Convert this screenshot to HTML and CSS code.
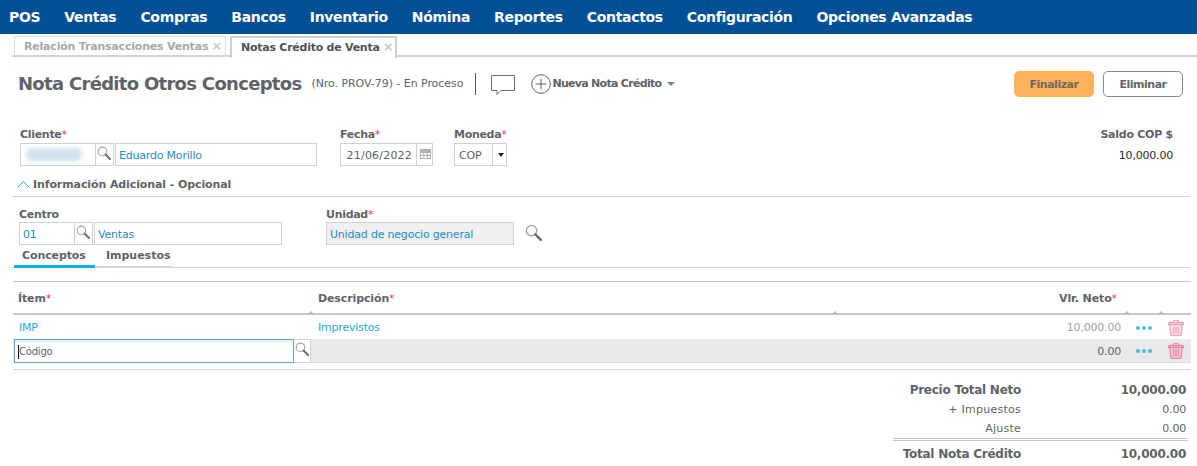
FILE: index.html
```html
<!DOCTYPE html>
<html lang="es">
<head>
<meta charset="utf-8">
<title>Nota Crédito</title>
<link rel="stylesheet" href="styles.css">
</head>
<body>
<svg class="defs" width="0" height="0">
  <symbol id="i-search" viewBox="0 0 16 16"><circle cx="6.200" cy="6.200" r="4.900" fill="none" stroke="#a0a4a7" stroke-width="1.300"/><path d="M9.800 9.800l5 5" stroke="#6d7275" stroke-width="2.400" stroke-linecap="round"/></symbol>
  <symbol id="i-trash" viewBox="0 0 16 16"><path d="M5.500 2.500V1.500a1 1 0 0 1 1-1h3a1 1 0 0 1 1 1v1" fill="none" stroke="currentColor" stroke-width="1.200"/><path d="M1.500 2.500h13a1 1 0 0 1 1 1v1h-15v-1a1 1 0 0 1 1-1zM2 4.500l.6 9.500a1.500 1.500 0 0 0 1.500 1.500h7.800a1.500 1.500 0 0 0 1.500-1.500l.6-9.500z" fill="currentColor" fill-opacity=".25" stroke="currentColor" stroke-width="1.400"/><path d="M5.500 6.500v7M8 6.500v7M10.500 6.500v7" fill="none" stroke="currentColor" stroke-width="1.500"/></symbol>
  <symbol id="i-dots" viewBox="0 0 16 4"><circle cx="2" cy="2" r="2"/><circle cx="8" cy="2" r="2"/><circle cx="14" cy="2" r="2"/></symbol>
</svg>
<nav class="topnav">
  <a>POS</a><a>Ventas</a><a>Compras</a><a>Bancos</a><a>Inventario</a><a>Nómina</a><a>Reportes</a><a>Contactos</a><a>Configuración</a><a>Opciones Avanzadas</a>
</nav>
<div class="doctabs">
  <div class="doctab">Relación Transacciones Ventas<span class="x">×</span></div>
  <div class="doctab active">Notas Crédito de Venta<span class="x">×</span></div>
</div>
<header class="titlebar">
  <h1>Nota Crédito Otros Conceptos</h1>
  <span class="docno">(Nro. PROV-79) - En Proceso</span>
  <span class="vsep"></span>
  <svg class="chat" width="24" height="21" viewBox="0 0 24 21"><path d="M.5.5h23v15H10l-4 4v-4H.5z" fill="none" stroke="#6b6f73"/></svg>
  <svg class="plus" width="20" height="20" viewBox="0 0 20 20"><circle cx="10" cy="10" r="9.300" fill="none" stroke="#5f6368"/><path d="M10 4.500v11M4.500 10h11" stroke="#5f6368"/></svg>
  <span class="newnote">Nueva Nota Crédito</span><span class="caret"></span>
  <div class="actions">
    <button class="btn primary">Finalizar</button>
    <button class="btn">Eliminar</button>
  </div>
</header>
<section class="formrow">
  <div class="field f-client">
    <label>Cliente<i>*</i></label>
    <div class="inputs">
      <div class="box code"><span class="blur"></span><span class="sbtn"><svg width="14" height="14"><use href="#i-search"/></svg></span></div>
      <div class="box name link">Eduardo Morillo</div>
    </div>
  </div>
  <div class="field f-date">
    <label>Fecha<i>*</i></label>
    <div class="box date"><span class="val">21/06/2022</span><span class="cal"><svg width="11" height="10" viewBox="0 0 11 10"><path d="M.5.5h10v9H.5zM.5 3.500h10M.5 6.500h10M3.800 3.500v6M7.200 3.500v6" fill="none" stroke="#b0b3b5"/><path d="M.5 1h10v2H.5z" fill="#b0b3b5"/></svg></span></div>
  </div>
  <div class="field f-cur">
    <label>Moneda<i>*</i></label>
    <div class="box cur"><span class="val">COP</span><span class="drop"></span></div>
  </div>
  <div class="saldo">
    <strong>Saldo COP $</strong>
    <span>10,000.00</span>
  </div>
</section>
<div class="collapse">
  <svg width="13" height="7" viewBox="0 0 13 7"><path d="M.5 6.500l6-6 6 6" fill="none" stroke="#1ba6d3"/></svg>
  <span>Información Adicional - Opcional</span>
</div>
<section class="formrow second">
  <div class="field f-centro">
    <label>Centro</label>
    <div class="inputs">
      <div class="box code2 link"><span class="val">01</span><span class="sbtn"><svg width="14" height="14"><use href="#i-search"/></svg></span></div>
      <div class="box name2 link">Ventas</div>
    </div>
  </div>
  <div class="field f-unidad">
    <label>Unidad<i>*</i></label>
    <div class="inputs">
      <div class="box unit link">Unidad de negocio general</div>
      <svg class="bigsearch" width="17" height="17"><use href="#i-search"/></svg>
    </div>
  </div>
</section>
<div class="subtabs">
  <div class="subtab on">Conceptos</div>
  <div class="subtab">Impuestos</div>
</div>
<section class="grid">
  <div class="row head">
    <div class="c-item">Ítem<i>*</i><b class="rz"></b></div>
    <div class="c-desc">Descripción<i>*</i><b class="rz"></b></div>
    <div class="c-val">Vlr. Neto<i>*</i><b class="rz"></b></div>
    <div class="c-more"><b class="rz"></b></div>
    <div class="c-del"></div>
  </div>
  <div class="row data">
    <div class="c-item link">IMP</div>
    <div class="c-desc link">Imprevistos</div>
    <div class="c-val muted">10,000.00</div>
    <div class="c-more"><svg class="dots" width="16" height="4"><use href="#i-dots"/></svg></div>
    <div class="c-del"><svg width="16" height="16"><use href="#i-trash"/></svg></div>
  </div>
  <div class="row edit">
    <div class="c-item"><div class="codeinput"><span class="cursor"></span>Código</div><span class="sbtn2"><svg width="14" height="14"><use href="#i-search"/></svg></span></div>
    <div class="c-desc"></div>
    <div class="c-val">0.00</div>
    <div class="c-more"><svg class="dots" width="16" height="4"><use href="#i-dots"/></svg></div>
    <div class="c-del"><svg width="16" height="16"><use href="#i-trash"/></svg></div>
  </div>
</section>
<section class="totals">
  <div class="tot strong"><span>Precio Total Neto</span><span>10,000.00</span></div>
  <div class="tot"><span class="lbl">+ Impuestos</span><span>0.00</span></div>
  <div class="tot"><span class="lbl">Ajuste</span><span>0.00</span></div>
  <div class="tot strong final"><span>Total Nota Crédito</span><span>10,000.00</span></div>
</section>
</body>
</html>
```
FILE: styles.css
```css
* { box-sizing: border-box; }
html, body { margin: 0; padding: 0; }
body { width: 1197px; height: 466px; overflow: hidden; background: #fff; font: 11px/14px "DejaVu Sans", Verdana, sans-serif; color: #5f6368; letter-spacing: -.2px; }
.defs { position: absolute; }
i { font-style: normal; color: #e0357a; font-weight: 400; }
.link { color: #1c8fbf; }

.topnav { height: 34px; background: #015096; display: flex; align-items: center; gap: 24px; padding-left: 9px; color: #fff; font-weight: 700; font-size: 14px; letter-spacing: -.32px; }

.doctabs { height: 23px; margin: 0 0 0 12px; padding: 2px 0 0 2px; display: flex; gap: 4px; border-bottom: 2px solid #d4d4d4; }
.doctab { height: 21px; padding: 0 4px 0 9px; border: 1px solid #dcdcdc; border-width: 1px 1px 0 1px; font-weight: 700; line-height: 17px; color: #a8a8a8; width: 212px; white-space: nowrap; letter-spacing: -.2px; }
.doctab.active { color: #4f5358; width: 167px; background: #fff; height: 22px; border-color: #cfcfcf; border-width: 2px 2px 0 2px; letter-spacing: -.25px; }
.x { color: #c9c9c9; margin-left: 3px; font-size: 13px; }

.titlebar { height: 54px; display: flex; align-items: center; padding: 0 14px 0 18px; }
h1 { margin: 0; font-size: 18px; font-weight: 700; color: #5f6368; letter-spacing: -.7px; white-space: nowrap; }
.docno { margin-left: 10px; color: #5f6368; white-space: nowrap; letter-spacing: -.05px; }
.vsep { width: 1px; height: 22px; background: #55595c; margin: 0 15px 0 12px; }
.chat { margin-top: 2px; }
.plus { margin-left: 16px; }
.newnote { margin-left: 1px; font-weight: 700; letter-spacing: -.7px; white-space: nowrap; }
.caret { margin-left: 6px; border: 4px solid transparent; border-top-color: #7d8185; border-bottom: 0; width: 0; height: 0; }
.actions { margin-left: auto; display: flex; gap: 9px; }
.btn { width: 80px; height: 26px; border: 1px solid #85898c; border-radius: 5px; background: #fff; font: 700 11px "DejaVu Sans", sans-serif; letter-spacing: -.5px; color: #62666a; padding: 0; }
.btn.primary { background: #ffb259; border-color: #ffb259; color: #6f6a60; }

.formrow { display: flex; height: 62px; padding: 17px 24px 0 20px; }
.field label { display: block; font-weight: 700; height: 14px; line-height: 14px; letter-spacing: -.3px; }
.inputs { display: flex; align-items: flex-start; }
.box { height: 23px; margin-top: 1px; border: 1px solid #d0d0d0; line-height: 23px; white-space: nowrap; display: flex; }
.code { width: 94px; justify-content: space-between; }
.blur { width: 56px; height: 13px; margin: 4px 0 0 5px; background: #cfe3ec; border-radius: 6px; filter: blur(2px); }
.sbtn { width: 18px; border-left: 1px solid #d0d0d0; padding: 2px 0 0 1px; display: block; line-height: 0; }
.name { width: 202px; margin-left: 1px; padding-left: 3px; }
.f-client { width: 320px; }
.f-date { width: 114px; }
.date { width: 93px; color: #5f6368; }
.date .val { width: 76px; text-align: right; padding-right: 4px; border-right: 1px solid #d0d0d0; letter-spacing: .2px; }
.cal { padding: 5px 0 0 3px; line-height: 0; }
.cur { width: 53px; }
.cur .val { width: 38px; padding-left: 4px; border-right: 1px solid #d0d0d0; }
.drop { margin: 9px 0 0 5px; border: 3px solid transparent; border-top: 4px solid #222; border-bottom: 0; width: 0; height: 0; }
.saldo { margin-left: auto; display: flex; flex-direction: column; align-items: flex-end; gap: 7px; }
.saldo strong { letter-spacing: -.25px; }
.saldo span { color: #1f2a30; }

.collapse { height: 24px; margin: 0 7px 0 12px; padding: 0 0 0 5px; display: flex; align-items: center; gap: 3px; border-bottom: 1px solid #d4d4d4; font-weight: 700; letter-spacing: -.1px; }

.second { height: 48px; padding: 11px 0 0 19px; }
.second .box { margin-top: 0; }
.f-centro { width: 307px; }
.code2 { width: 74px; justify-content: space-between; }
.code2 .val { padding-left: 3px; }
.name2 { width: 188px; margin-left: 1px; padding-left: 3px; }
.unit { width: 188px; background: #efefef; padding-left: 3px; }
.bigsearch { margin: 2px 0 0 11px; }

.subtabs { height: 23px; margin: 0 7px 0 12px; padding-left: 2px; display: flex; border-bottom: 1px solid #d4d4d4; font-weight: 700; }
.subtab { width: 78px; padding-left: 11px; height: 23px; border-bottom: 2px solid #d4d4d4; line-height: 22px; letter-spacing: -.02px; }
.subtab.on { width: 81px; padding-left: 8px; border-bottom: 3px solid #0fb0e8; letter-spacing: -.1px; }

.grid { margin: 13px 6px 0 13px; border-top: 1px solid #c8c8c8; border-bottom: 1px solid #d4d4d4; padding-bottom: 6px; }
.row { display: grid; grid-template-columns: 302px 524px 292px 34px 26px; align-items: center; }
.row > div { position: relative; }
.head { height: 33px; font-weight: 700; border-bottom: 2px solid #c8c8c8; letter-spacing: -.12px; align-items: stretch; line-height: 33px; }
.head .c-item { padding-left: 5px; }
.rz { position: absolute; right: 0; bottom: 0; border: 4px solid transparent; border-bottom: 4px solid #bdbdbd; border-top: 0; }
.data { height: 24px; padding-top: 1px; }
.data .c-item { padding-left: 6px; }
.data .link { color: #1fa8cc; }
.c-desc { padding-left: 3px; }
.c-val { text-align: right; padding-right: 10px; }
.head .c-val { padding-right: 14px; }
.muted { color: #a2a2a2; }
.c-more { text-align: center; padding-right: 8px; line-height: 0; }
.head .c-more { line-height: 33px; }
.dots { fill: #4db8de; }
.c-del { color: #f5a3b8; line-height: 0; padding-left: 3px; }
.edit { height: 24px; background: #e9e9e9; border-bottom: 1px solid #dcdcdc; }
.edit .c-del { color: #ec8aa0; }
.edit .c-item { display: flex; height: 24px; }
.edit .c-val { padding-top: 1px; }
.codeinput { width: 280px; height: 24px; margin-left: 1px; background: #fff; border: 1px solid #62a7d4; line-height: 24px; padding-left: 3px; font-size: 10px; box-shadow: inset 0 2px 2px #e4eef4; }
.cursor { display: inline-block; width: 1px; height: 14px; background: #111; vertical-align: middle; }
.sbtn2 { width: 17px; height: 24px; background: #fff; border: 1px solid #d4d4d4; border-left: 0; padding: 2px 0 0 1px; line-height: 0; }

.totals { width: 295px; margin: 11px 9px 0 auto; }
.tot { display: grid; grid-template-columns: 128px 1fr; text-align: right; height: 19px; line-height: 19px; padding-right: 2px; }
.lbl { letter-spacing: .25px; }
.strong { font-weight: 700; font-size: 12px; letter-spacing: -.25px; }
.final { border-top: 3px double #c8c8c8; height: 29px; line-height: 26px; }
```
